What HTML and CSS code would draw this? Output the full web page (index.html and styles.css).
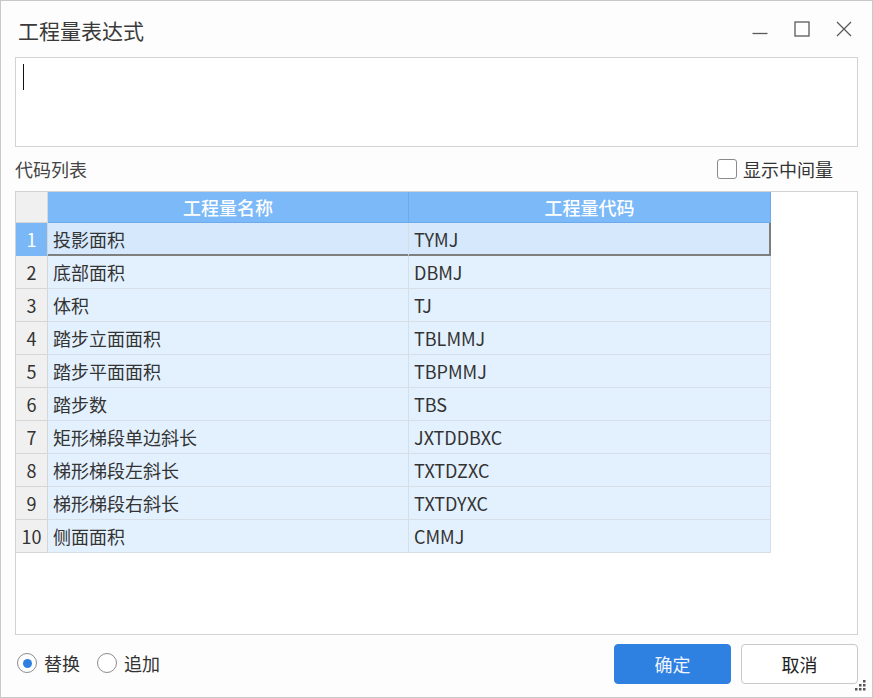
FILE: index.html
```html
<!DOCTYPE html>
<html lang="zh">
<head>
<meta charset="utf-8">
<title>工程量表达式</title>
<link rel="stylesheet" href="styles.css">
</head>
<body>
<div class="window">
  <div class="titlebar">
    <div class="title">工程量表达式</div>
    <div class="controls">
      <span class="ctl"><svg width="16" height="16" viewBox="0 0 16 16"><line x1="0.5" y1="12.5" x2="15.5" y2="12.5" stroke="#5a5a5a" stroke-width="1.3"/></svg></span>
      <span class="ctl"><svg width="16" height="16" viewBox="0 0 16 16"><rect x="1" y="1" width="14" height="14" fill="none" stroke="#5a5a5a" stroke-width="1.3"/></svg></span>
      <span class="ctl"><svg width="16" height="16" viewBox="0 0 16 16"><path d="M1 1 L15 15 M15 1 L1 15" stroke="#5a5a5a" stroke-width="1.3" fill="none"/></svg></span>
    </div>
  </div>
  <div class="expr"><div class="caret"></div></div>
  <div class="labelrow">
    <span class="label">代码列表</span>
    <label class="check"><span class="box"></span><span>显示中间量</span></label>
  </div>
  <div class="gridbox">
    <table class="grid">
      <colgroup><col class="c0"><col class="c1"><col class="c2"></colgroup>
      <thead>
        <tr><th class="corner"></th><th>工程量名称</th><th>工程量代码</th></tr>
      </thead>
      <tbody>
        <tr class="sel"><td class="num">1</td><td>投影面积</td><td class="last">TYMJ</td></tr>
        <tr><td class="num">2</td><td>底部面积</td><td>DBMJ</td></tr>
        <tr><td class="num">3</td><td>体积</td><td>TJ</td></tr>
        <tr><td class="num">4</td><td>踏步立面面积</td><td>TBLMMJ</td></tr>
        <tr><td class="num">5</td><td>踏步平面面积</td><td>TBPMMJ</td></tr>
        <tr><td class="num">6</td><td>踏步数</td><td>TBS</td></tr>
        <tr><td class="num">7</td><td>矩形梯段单边斜长</td><td>JXTDDBXC</td></tr>
        <tr><td class="num">8</td><td>梯形梯段左斜长</td><td>TXTDZXC</td></tr>
        <tr><td class="num">9</td><td>梯形梯段右斜长</td><td>TXTDYXC</td></tr>
        <tr><td class="num">10</td><td>侧面面积</td><td>CMMJ</td></tr>
      </tbody>
    </table>
  </div>
  <div class="bottom">
    <div class="radios">
      <label class="radio"><span class="dot on"></span><span>替换</span></label>
      <label class="radio"><span class="dot"></span><span>追加</span></label>
    </div>
    <div class="buttons">
      <button class="btn primary">确定</button>
      <button class="btn">取消</button>
    </div>
  </div>
  <svg class="grip" width="12" height="12" viewBox="0 0 12 12">
    <rect x="8" y="0" width="2.5" height="2.5" fill="#555"/>
    <rect x="4" y="4" width="2.5" height="2.5" fill="#555"/>
    <rect x="8" y="4" width="2.5" height="2.5" fill="#555"/>
    <rect x="0" y="8" width="2.5" height="2.5" fill="#555"/>
    <rect x="4" y="8" width="2.5" height="2.5" fill="#555"/>
    <rect x="8" y="8" width="2.5" height="2.5" fill="#555"/>
  </svg>
</div>
</body>
</html>
```
FILE: styles.css
```css
html, body {
  margin: 0;
  padding: 0;
  background: #ffffff;
}
body {
  font-family: "Noto Sans CJK SC", "Noto Sans", sans-serif;
  color: #333;
}
.window {
  position: relative;
  width: 873px;
  height: 698px;
  box-sizing: border-box;
  border: 1px solid #c9c9c9;
  background: #fdfdfd;
  padding: 0 14px;
  display: flex;
  flex-direction: column;
}
.titlebar {
  height: 56px;
  display: flex;
  align-items: center;
  justify-content: space-between;
  flex: none;
}
.title {
  font-size: 21px;
  color: #3a3a3a;
  padding-left: 3px;
  padding-top: 2px;
}
.controls {
  display: flex;
  margin-right: -7px;
}
.ctl {
  width: 42px;
  height: 30px;
  display: flex;
  align-items: center;
  justify-content: center;
}
.expr {
  height: 90px;
  box-sizing: border-box;
  border: 1px solid #d3d3d3;
  background: #fff;
  flex: none;
}
.caret {
  width: 1px;
  height: 26px;
  background: #111;
  margin: 6px 0 0 7px;
}
.labelrow {
  height: 44px;
  flex: none;
  display: flex;
  align-items: center;
  justify-content: space-between;
}
.label {
  font-size: 18px;
  color: #444;
}
.check {
  display: flex;
  align-items: center;
  font-size: 18px;
  color: #333;
  margin-right: 25px;
  gap: 6px;
}
.box {
  width: 20px;
  height: 20px;
  box-sizing: border-box;
  border: 1.5px solid #8a8a8a;
  border-radius: 3px;
  background: #fff;
}
.gridbox {
  height: 444px;
  box-sizing: border-box;
  border: 1px solid #d2d2d2;
  background: #fff;
  flex: none;
}
.grid {
  border-collapse: separate;
  border-spacing: 0;
  table-layout: fixed;
  width: 755px;
  font-size: 18px;
}
.c0 { width: 32px; }
.c1 { width: 361px; }
.c2 { width: 362px; }
.grid th {
  height: 30px;
  padding: 0;
  background: #7cb9f8;
  color: #fff;
  font-weight: 500;
  border-right: 1px solid #6eaaea;
  border-bottom: 1px solid #6eaaea;
  text-align: center;
}
.grid th.corner {
  background: #f0f0f0;
  border-right: 1px solid #d8d8d8;
  border-bottom: 1px solid #d8d8d8;
}
.grid td {
  height: 32px;
  padding: 0 0 0 5px;
  background: #e3f1fe;
  border-right: 1px solid #d6dfe8;
  border-bottom: 1px solid #d6dfe8;
  color: #333;
  white-space: nowrap;
}
.grid td.num {
  padding: 0;
  text-align: center;
  background: #f0f0f0;
  border-right: 1px solid #d6d6d6;
  border-bottom: 1px solid #d6d6d6;
}
.grid tr.sel td {
  background: #d5e8fc;
  border-bottom-color: #7f7f7f;
  box-shadow: inset 0 -1px #7f7f7f;
}
.grid tr.sel td.last {
  border-right-color: #7f7f7f;
  box-shadow: inset 0 -1px #7f7f7f, inset -1px 0 #7f7f7f;
}
.grid tr.sel td.num {
  background: #7ab7f7;
  color: #fff;
  border-bottom-color: #7ab7f7;
  box-shadow: none;
}
.bottom {
  flex: 1;
  display: flex;
  justify-content: space-between;
  align-items: flex-start;
}
.radios {
  display: flex;
  align-items: center;
  margin-top: 15px;
  padding-left: 2px;
  gap: 17px;
}
.radio {
  display: flex;
  align-items: center;
  gap: 7px;
  font-size: 18px;
  color: #333;
}
.dot {
  width: 20px;
  height: 20px;
  box-sizing: border-box;
  border: 1.5px solid #8c8c8c;
  border-radius: 50%;
  background: #fff;
  display: flex;
  align-items: center;
  justify-content: center;
}
.dot.on::after {
  content: "";
  width: 9px;
  height: 9px;
  border-radius: 50%;
  background: #2f7fe1;
}
.buttons {
  display: flex;
  gap: 10px;
  margin-top: 9px;
}
.btn {
  width: 117px;
  height: 40px;
  box-sizing: border-box;
  border: 1px solid #c9c9c9;
  border-radius: 4px;
  background: #fff;
  font-family: "Noto Sans CJK SC", "Noto Sans", sans-serif;
  font-size: 18px;
  color: #222;
  padding: 0;
}
.btn.primary {
  background: #2e80e1;
  border-color: #2e80e1;
  color: #eef4ff;
}
.grip {
  position: absolute;
  right: 5px;
  bottom: 5px;
}
```
